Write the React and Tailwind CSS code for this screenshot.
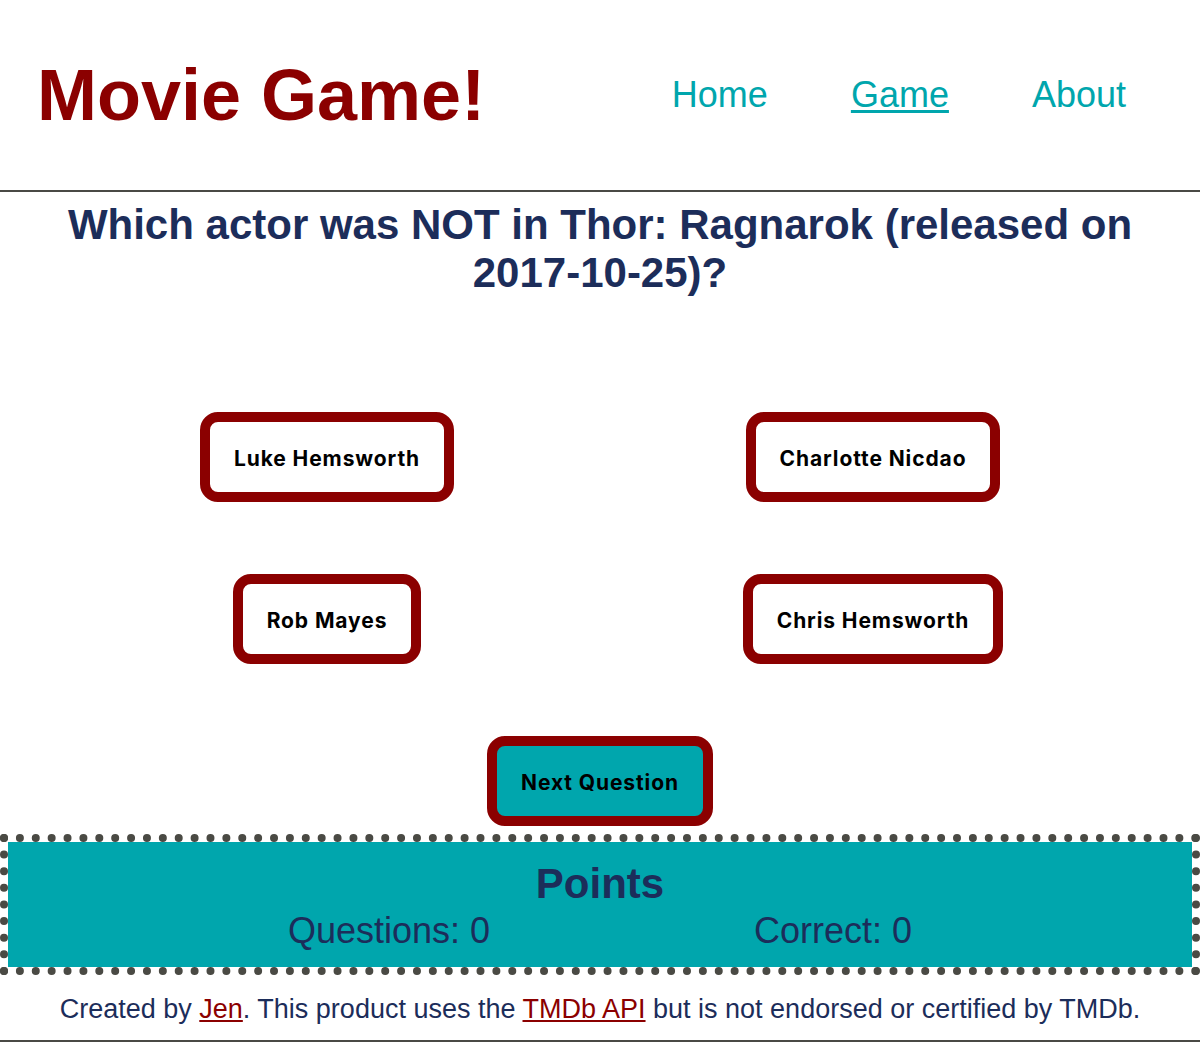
import React, { useState } from 'react';

const answers = ['Luke Hemsworth', 'Charlotte Nicdao', 'Rob Mayes', 'Chris Hemsworth'];

function AnswerButton({ label, onClick, highlight }) {
  return (
    <button
      onClick={onClick}
      className={`h-[90px] px-[24px] pt-[3px] rounded-[18px] border-[10px] border-[#8b0000] text-[21px] tracking-[0.9px] font-bold text-black font-['Inter',sans-serif] cursor-pointer ${
        highlight ? 'bg-[#00a6ad]' : 'bg-white'
      }`}
    >
      {label}
    </button>
  );
}

export default function App() {
  const [questions, setQuestions] = useState(0);
  const [correct, setCorrect] = useState(0);

  return (
    <div className="min-h-screen bg-white font-['Liberation_Sans',Arial,sans-serif]">
      {/* header */}
      <header className="h-[192px] flex items-center justify-between border-b-2 border-[#4a4a45] pl-[37px] pr-[74px]">
        <h1 className="text-[72px] font-bold text-[#8b0000] leading-none">Movie Game!</h1>
        <nav className="flex gap-[83px] text-[36px] text-[#00a6ad]">
          <a href="#" className="no-underline">Home</a>
          <a href="#" className="underline underline-offset-[3px]">Game</a>
          <a href="#" className="no-underline">About</a>
        </nav>
      </header>

      {/* question */}
      <h2 className="mt-[9px] px-[40px] text-center text-[42px] leading-[48px] font-bold text-[#1c2d5a]">
        Which actor was NOT in Thor: Ragnarok (released on 2017-10-25)?
      </h2>

      <div className="mt-[115px] mx-[54px] grid grid-cols-2 gap-y-[72px]">
        {answers.map((a) => (
          <div key={a} className="flex justify-center">
            <AnswerButton label={a} onClick={() => setQuestions(questions + 1)} />
          </div>
        ))}
      </div>

      <div className="mt-[72px] flex justify-center">
        <AnswerButton label="Next Question" highlight onClick={() => setCorrect(correct)} />
      </div>

      {/* points */}
      <section className="mt-[8px] border-8 border-dotted border-[#4a4a44] bg-[#00a6ad] bg-clip-padding text-[#1c2d5a] text-center pt-[18px] pb-[16px]">
        <h2 className="text-[42px] leading-[48px] font-bold">Points</h2>
        <div className="mt-[3px] flex justify-center gap-[264px] text-[36px] leading-[40px]">
          <span>Questions: {questions}</span>
          <span>Correct: {correct}</span>
        </div>
      </section>

      {/* footer */}
      <footer className="pt-[19px] pb-[15px] border-b-2 border-[#4a4a45] text-center text-[27px] leading-[31px] text-[#1c2d5a]">
        Created by <a href="#" className="text-[#8b0000] underline">Jen</a>. This product uses the{' '}
        <a href="#" className="text-[#8b0000] underline">TMDb API</a> but is not endorsed or certified by TMDb.
      </footer>
    </div>
  );
}
